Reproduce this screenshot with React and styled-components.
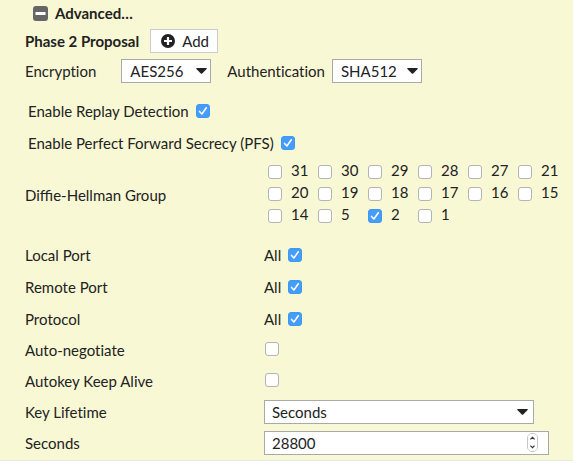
import React, { useState } from "react";
import styled, { createGlobalStyle, css } from "styled-components";

const GlobalStyle = createGlobalStyle`
  *, *::before, *::after { box-sizing: border-box; }
  body {
    margin: 0;
    background: #fdfdfd;
    color: #222;
    font-family: Lato, sans-serif;
    font-size: 15px;
    line-height: 20px;
    font-variant-ligatures: no-common-ligatures;
  }
  button, input, select { font: inherit; color: inherit; }
`;

const Panel = styled.form`
  background: #f9f8d5;
  padding: 0 24px 1px 25px;
  border-bottom: 1px solid #e8e8e8;
`;

const SectionToggle = styled.button`
  display: flex;
  align-items: center;
  gap: 7px;
  height: 26px;
  margin-left: 8px;
  padding: 0;
  border: 0;
  background: none;
  font-weight: 700;
`;

const Line = styled.div`
  display: flex;
  align-items: center;
  min-height: 30px;
`;

const Heading = styled.h2`
  margin: 0 11px 0 0;
  font-size: 15px;
  font-weight: 700;
`;

const AddButton = styled.button`
  display: flex;
  align-items: center;
  gap: 7px;
  height: 24px;
  padding: 0 8px 0 10px;
  border: 1px solid #ccc;
  background: #fff;
`;

const ProposalLabel = styled.label`
  margin-right: ${(p) => p.$gap}px;
`;

const SelectFrame = styled.span`
  display: inline-grid;
  align-items: center;
  width: ${(p) => (p.$wide ? "calc(100% - 15px)" : "90px")};
  margin-right: ${(p) => (p.$wide ? 0 : 16)}px;

  > * { grid-area: 1 / 1; }
  > svg {
    justify-self: end;
    margin-right: ${(p) => (p.$wide ? 6 : 4)}px;
    pointer-events: none;
  }
`;

const field = css`
  width: 100%;
  height: 24px;
  margin: 0;
  border: 1px solid #a9a9a9;
  border-radius: 0;
  background: #fff;
  appearance: none;
`;

const Select = styled.select`
  ${field}
  padding: 0 18px 0 ${(p) => (p.$wide ? 7 : 8)}px;
`;

const Options = styled.div`
  margin-top: 9px;
`;

const OptionLine = styled.label`
  display: flex;
  align-items: center;
  gap: 7px;
  height: 32px;
  padding-left: 3px;
`;

const Checkbox = styled.input.attrs({ type: "checkbox" })`
  flex: none;
  width: 14px;
  height: 14px;
  margin: 0;
  border: 1px solid #b4b4b4;
  border-radius: 3px;
  appearance: none;
  background: #fff;

  &:checked {
    border-color: #3f98f7;
    background: #459df9
      url("data:image/svg+xml,%3Csvg xmlns='http://www.w3.org/2000/svg' viewBox='0 0 12 12'%3E%3Cpath d='M2.5 6.4 4.9 9 9.3 2.7' fill='none' stroke='white' stroke-width='1.5' stroke-linecap='round' stroke-linejoin='round'/%3E%3C/svg%3E")
      center / 12px 12px no-repeat;
  }
`;

const FormRow = styled.div`
  display: grid;
  grid-template-columns: 239px minmax(0, 1fr);
  align-items: center;
  min-height: ${(p) => (p.$tall ? 32 : 31)}px;
  padding-bottom: ${(p) => (p.$tall ? 0 : 1)}px;
`;

const GroupRow = styled.fieldset`
  display: grid;
  grid-template-columns: 243px minmax(0, 1fr);
  align-items: center;
  margin: 1px 0 13px;
  padding: 0;
  border: 0;
`;

const GroupName = styled.span`
  padding-top: 4px;
  font-variant-ligatures: common-ligatures;
`;

const GroupGrid = styled.div`
  display: grid;
  grid-template-columns: repeat(6, 50px);
  grid-auto-rows: 22px;
`;

const GroupOption = styled.label`
  display: flex;
  align-items: flex-end;
  gap: 9px;

  ${Checkbox} { margin-bottom: 3px; }
  span { align-self: flex-start; }
`;

const AllOption = styled.label`
  display: flex;
  align-items: center;
  gap: 7px;
`;

const SingleOption = styled.div`
  display: flex;
  padding: 0 1px 2px;
`;

const NumberFrame = styled.div`
  position: relative;
`;

const NumberInput = styled.input.attrs({ type: "number" })`
  ${field}
  display: block;
  padding: 0 30px 0 7px;
  appearance: textfield;

  &::-webkit-inner-spin-button { appearance: none; margin: 0; }
`;

const Stepper = styled.div`
  position: absolute;
  top: 2px;
  right: 11px;
  display: grid;
  width: 11px;
  height: 19px;
  border: 1px solid #c4c4c4;
  border-radius: 5px;
  overflow: hidden;
`;

const StepButton = styled.button`
  display: grid;
  place-items: center;
  min-height: 0;
  padding: 0;
  border: 0;
  background: #fff;
`;

const MinusIcon = () => (
  <svg width="15" height="15" viewBox="0 0 15 15" aria-hidden="true">
    <rect width="15" height="15" rx="3" fill="#666" />
    <rect x="2.5" y="6" width="10" height="3" fill="#fff" />
  </svg>
);

const PlusIcon = () => (
  <svg width="14" height="14" viewBox="0 0 14 14" aria-hidden="true">
    <circle cx="7" cy="7" r="7" fill="#222" />
    <path d="M7 3v8M3 7h8" stroke="#fff" strokeWidth="2.2" />
  </svg>
);

const Caret = () => (
  <svg width="11" height="6" viewBox="0 0 11 6" aria-hidden="true">
    <path d="M.8 0h9.4q1 .2.4 1L6.2 5.5q-.7.6-1.4 0L.4 1Q-.2.2.8 0Z" fill="#222" />
  </svg>
);

const Chevron = ({ down }) => (
  <svg width="5" height="4" viewBox="0 0 5 4" aria-hidden="true">
    <path d={down ? "M.4.6l2.1 2.1L4.6.6" : "M.4 3.4l2.1-2.1 2.1 2.1"} fill="none" stroke="#333" strokeWidth="1.2" />
  </svg>
);

function Dropdown({ id, options, wide }) {
  return (
    <SelectFrame $wide={wide}>
      <Select id={id} $wide={wide}>
        {options.map((o) => <option key={o}>{o}</option>)}
      </Select>
      <Caret />
    </SelectFrame>
  );
}

const groups = [31, 30, 29, 28, 27, 21, 20, 19, 18, 17, 16, 15, 14, 5, 2, 1];
const selectors = ["Local Port", "Remote Port", "Protocol"];
const switches = ["Auto-negotiate", "Autokey Keep Alive"];

export default function App() {
  const [seconds, setSeconds] = useState(28800);

  return (
    <>
      <GlobalStyle />
      <Panel>
        <SectionToggle type="button" aria-expanded="true">
          <MinusIcon />
          Advanced…
        </SectionToggle>
        <Line>
          <Heading>Phase 2 Proposal</Heading>
          <AddButton type="button"><PlusIcon />Add</AddButton>
        </Line>
        <Line>
          <ProposalLabel htmlFor="encryption" $gap={25}>Encryption</ProposalLabel>
          <Dropdown id="encryption" options={["AES256", "AES192", "AES128"]} />
          <ProposalLabel htmlFor="authentication" $gap={7}>Authentication</ProposalLabel>
          <Dropdown id="authentication" options={["SHA512", "SHA384", "SHA256"]} />
        </Line>
        <Options>
          <OptionLine>Enable Replay Detection<Checkbox defaultChecked /></OptionLine>
          <OptionLine>Enable Perfect Forward Secrecy (PFS)<Checkbox defaultChecked /></OptionLine>
        </Options>
        <GroupRow aria-labelledby="dh-group">
          <GroupName id="dh-group">Diffie-Hellman Group</GroupName>
          <GroupGrid>
            {groups.map((g) => (
              <GroupOption key={g}>
                <Checkbox defaultChecked={g === 2} />
                <span>{g}</span>
              </GroupOption>
            ))}
          </GroupGrid>
        </GroupRow>
        {selectors.map((name) => (
          <FormRow key={name} $tall role="group" aria-label={name}>
            <span>{name}</span>
            <AllOption>All<Checkbox defaultChecked /></AllOption>
          </FormRow>
        ))}
        {switches.map((name) => (
          <FormRow key={name}>
            <label htmlFor={name}>{name}</label>
            <SingleOption><Checkbox id={name} /></SingleOption>
          </FormRow>
        ))}
        <FormRow>
          <label htmlFor="lifetime">Key Lifetime</label>
          <Dropdown id="lifetime" wide options={["Seconds", "Kilobytes", "Both"]} />
        </FormRow>
        <FormRow>
          <label htmlFor="seconds">Seconds</label>
          <NumberFrame>
            <NumberInput id="seconds" value={seconds} onChange={(e) => setSeconds(e.target.value)} />
            <Stepper>
              <StepButton type="button" aria-label="Increase" onClick={() => setSeconds(Number(seconds) + 1)}><Chevron /></StepButton>
              <StepButton type="button" aria-label="Decrease" onClick={() => setSeconds(Number(seconds) - 1)}><Chevron down /></StepButton>
            </Stepper>
          </NumberFrame>
        </FormRow>
      </Panel>
    </>
  );
}
